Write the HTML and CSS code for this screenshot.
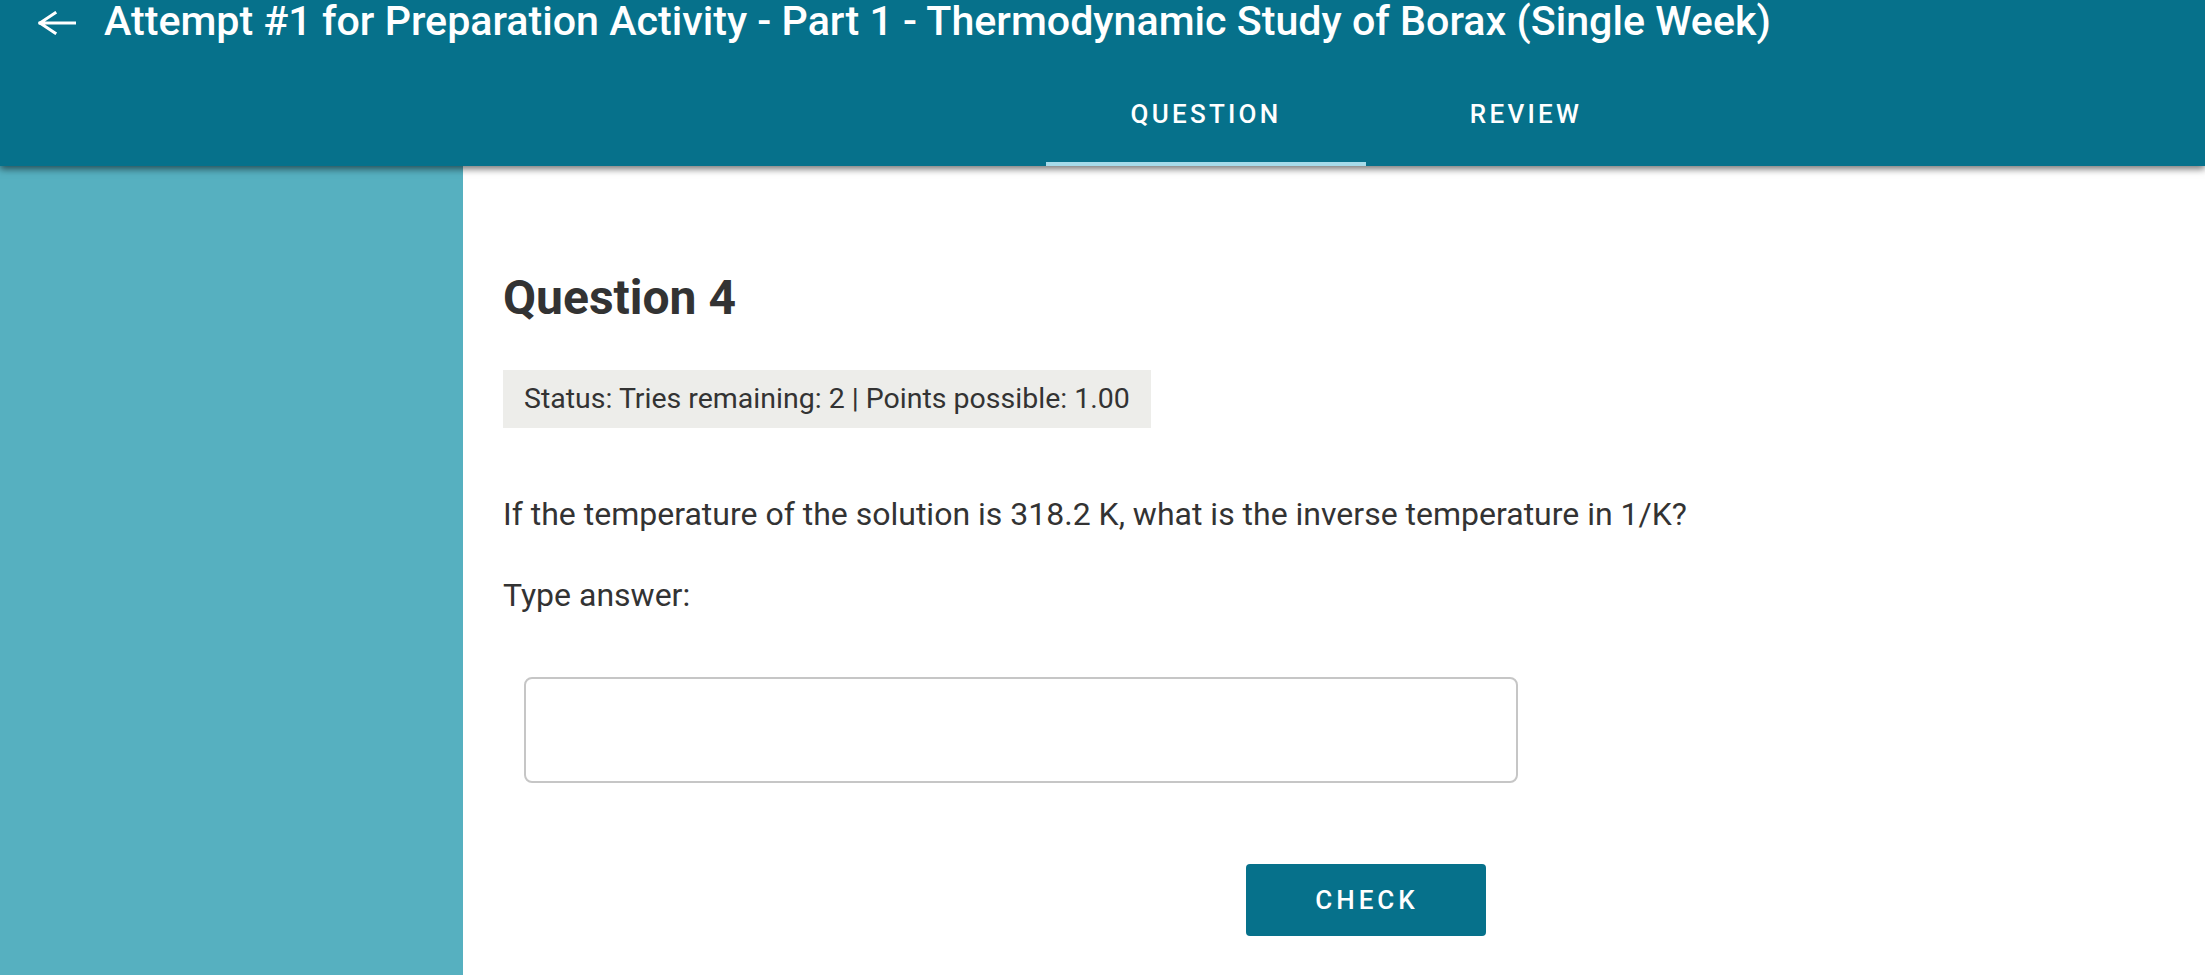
FILE: index.html
```html
<!DOCTYPE html>
<html lang="en">
<head>
<meta charset="utf-8">
<title>Attempt #1</title>
<link rel="stylesheet" href="styles.css">
</head>
<body>
<header class="appbar">
  <div class="titlebar">
    <svg class="back" width="38" height="24" viewBox="0 0 38 24" aria-hidden="true">
      <path d="M2 12 L17 2 M2 12 L17 22 M2 12 H37" fill="none" stroke="#ffffff" stroke-width="3" stroke-linecap="square" stroke-linejoin="miter"/>
    </svg>
    <h1 class="title">Attempt #1 for Preparation Activity - Part 1 - Thermodynamic Study of Borax (Single Week)</h1>
  </div>
  <nav class="tabs">
    <div class="tab active">QUESTION</div>
    <div class="tab">REVIEW</div>
  </nav>
</header>
<div class="layout">
  <aside class="sidebar"></aside>
  <main class="content">
    <h2 class="qtitle">Question 4</h2>
    <div class="status">Status: Tries remaining: 2 | Points possible: 1.00</div>
    <p class="prompt">If the temperature of the solution is 318.2 K, what is the inverse temperature in 1/K?</p>
    <p class="label">Type answer:</p>
    <input class="answer" type="text" aria-label="Type answer">
    <button class="check" type="button">CHECK</button>
  </main>
</div>
</body>
</html>
```

FILE: styles.css
```css
html, body {
  margin: 0;
  padding: 0;
}
body {
  width: 2205px;
  height: 975px;
  overflow: hidden;
  font-family: Roboto, "Liberation Sans", sans-serif;
  background: #ffffff;
  color: #333333;
  display: flex;
  flex-direction: column;
}
.appbar {
  position: relative;
  z-index: 2;
  height: 166px;
  flex: none;
  background: #06718b;
  color: #ffffff;
  box-shadow: 0 3px 7px rgba(0, 0, 0, 0.55);
  display: flex;
  flex-direction: column;
}
.titlebar {
  height: 42px;
  display: flex;
  align-items: flex-start;
}
.back {
  margin-left: 38px;
  margin-top: 11px;
  flex: none;
}
.title {
  margin: 0 0 0 28px;
  padding-top: 1px;
  font-size: 41.2px;
  line-height: 40px;
  font-weight: 500;
  white-space: nowrap;
}
.tabs {
  flex: 1;
  display: flex;
  padding-left: 1046px;
}
.tab {
  box-sizing: border-box;
  width: 320px;
  height: 124px;
  padding-top: 59px;
  text-align: center;
  font-size: 26px;
  line-height: 26px;
  font-weight: 500;
  letter-spacing: 3.25px;
  color: #ffffff;
}
.tab.active {
  border-bottom: 4px solid #a5dbea;
}
.layout {
  flex: 1;
  display: flex;
  min-height: 0;
}
.sidebar {
  width: 463px;
  flex: none;
  background: #56b0c0;
}
.content {
  flex: 1;
  padding: 104px 0 0 40px;
}
.qtitle {
  margin: 0;
  font-size: 48px;
  line-height: 56px;
  font-weight: 700;
  color: #333333;
}
.status {
  width: fit-content;
  margin-top: 44px;
  padding: 0 21px;
  background: #ededea;
  font-size: 28.5px;
  line-height: 58px;
  color: #333333;
}
.prompt {
  margin: 62px 0 0 0;
  font-size: 32px;
  line-height: 48px;
}
.label {
  margin: 33px 0 0 0;
  font-size: 32px;
  line-height: 48px;
}
.answer {
  display: block;
  box-sizing: border-box;
  margin: 58px 0 0 21px;
  width: 994px;
  height: 106px;
  border: 2px solid #c6c6c6;
  border-radius: 8px;
  background: #ffffff;
  font-family: Roboto, "Liberation Sans", sans-serif;
  font-size: 30px;
  padding: 0 16px;
}
.check {
  display: block;
  margin: 81px 0 0 743px;
  width: 240px;
  height: 72px;
  border: none;
  border-radius: 4px;
  background: #06718b;
  color: #ffffff;
  font-family: Roboto, "Liberation Sans", sans-serif;
  font-size: 26px;
  font-weight: 500;
  letter-spacing: 4px;
  padding: 0 0 0 2px;
}
```
